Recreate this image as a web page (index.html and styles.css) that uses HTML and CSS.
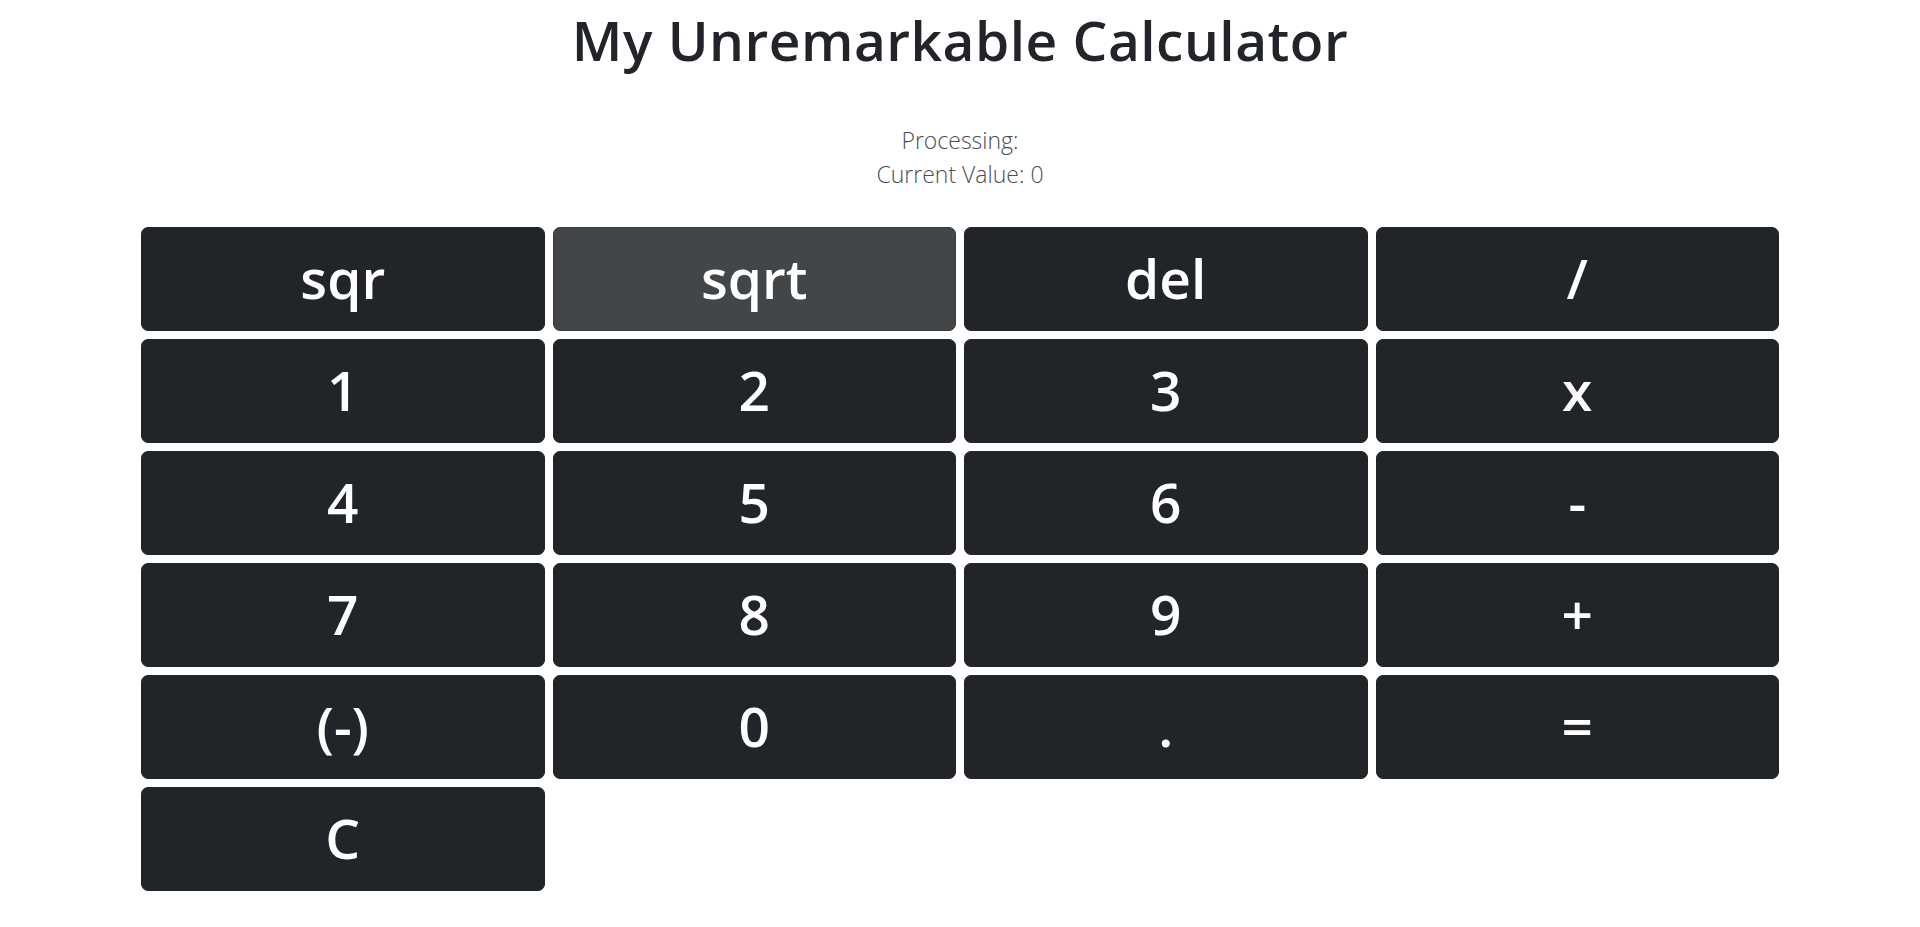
FILE: index.html
```html
<!DOCTYPE html>
<html lang="en">
<head>
<meta charset="utf-8">
<title>My Unremarkable Calculator</title>
<link rel="stylesheet" href="styles.css">
</head>
<body>
<main class="app">
  <h1 class="title">My Unremarkable Calculator</h1>
  <div class="status">
    <p class="status-line">Processing: </p>
    <p class="status-line">Current Value: 0</p>
  </div>
  <div class="keypad">
    <button class="key">sqr</button>
    <button class="key key-hover">sqrt</button>
    <button class="key">del</button>
    <button class="key">/</button>
    <button class="key">1</button>
    <button class="key">2</button>
    <button class="key">3</button>
    <button class="key">x</button>
    <button class="key">4</button>
    <button class="key">5</button>
    <button class="key">6</button>
    <button class="key">-</button>
    <button class="key">7</button>
    <button class="key">8</button>
    <button class="key">9</button>
    <button class="key">+</button>
    <button class="key">(-)</button>
    <button class="key">0</button>
    <button class="key">.</button>
    <button class="key">=</button>
    <button class="key">C</button>
  </div>
</main>
</body>
</html>
```

FILE: styles.css
```css
* {
  box-sizing: border-box;
}

html, body {
  margin: 0;
  padding: 0;
  background: #ffffff;
}

body {
  font-family: "Open Sans", "Noto Sans", "Liberation Sans", sans-serif;
  color: #212529;
}

.app {
  display: flex;
  flex-direction: column;
  align-items: center;
  padding: 6px 141px 0;
}

.title {
  margin: 0;
  font-size: 55px;
  font-weight: 600;
  line-height: 67px;
  text-align: center;
  letter-spacing: 0.5px;
}

.status {
  margin-top: 50px;
  display: flex;
  flex-direction: column;
  align-items: center;
}

.status-line {
  margin: 0;
  font-size: 23px;
  font-weight: 300;
  line-height: 34px;
  color: #4a4f54;
}

.keypad {
  margin-top: 36px;
  width: 100%;
  display: grid;
  grid-template-columns: repeat(4, 1fr);
  grid-auto-rows: 104px;
  column-gap: 8px;
  row-gap: 8px;
}

.key {
  display: flex;
  align-items: center;
  justify-content: center;
  padding: 0 0 4px;
  border: 1px solid #212529;
  border-radius: 7px;
  background: #212529;
  color: #ffffff;
  font-family: "Open Sans", "Noto Sans", "Liberation Sans", sans-serif;
  font-size: 55px;
  font-weight: 600;
  line-height: 1;
}

.key-hover {
  background: #424649;
  border-color: #373b3e;
}
```
